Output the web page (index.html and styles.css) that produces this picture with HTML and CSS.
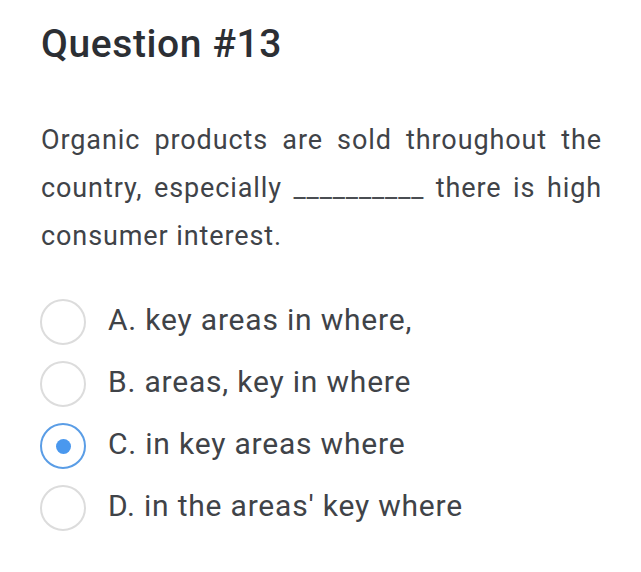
FILE: index.html
```html
<!DOCTYPE html>
<html lang="en">
<head>
    <meta charset="UTF-8">
    <meta name="viewport" content="width=device-width, initial-scale=1.0">
    <title>Question #13</title>
    <link rel="stylesheet" href="styles.css">
</head>
<body>
    <main class="question">
        <h1 class="question-title">Question #13</h1>
        <p class="question-text">Organic products are sold throughout the country, especially <span class="blank">__________</span> there is high consumer interest.</p>
        <ul class="options">
            <li class="option">
                <span class="radio"></span>
                <span class="option-label">A. key areas in where,</span>
            </li>
            <li class="option">
                <span class="radio"></span>
                <span class="option-label">B. areas, key in where</span>
            </li>
            <li class="option selected">
                <span class="radio"></span>
                <span class="option-label">C. in key areas where</span>
            </li>
            <li class="option">
                <span class="radio"></span>
                <span class="option-label">D. in the areas' key where</span>
            </li>
        </ul>
    </main>
</body>
</html>
```

FILE: styles.css
```css
body {
    font-family: Roboto, 'Noto Sans', sans-serif;
    background-color: #ffffff;
    color: #404348;
    margin: 0;
    padding: 0;
}
.question {
    padding: 20px 39px 0 41px;
}
.question-title {
    font-size: 39px;
    font-weight: 500;
    line-height: 48px;
    letter-spacing: 0.6px;
    color: #2c2f34;
    margin: 0;
}
.question-text {
    font-size: 27px;
    line-height: 48px;
    letter-spacing: 0.9px;
    text-align: justify;
    margin: 48px 0 0;
}
.blank {
    color: #4a4d52;
    letter-spacing: 0.9px;
}
.options {
    list-style: none;
    margin: 31px 0 0;
    padding: 0;
}
.option {
    display: flex;
    align-items: center;
    height: 62px;
}
.radio {
    width: 46px;
    height: 46px;
    margin-left: -1px;
    border: 2px solid #dcdcdc;
    border-radius: 50%;
    box-sizing: border-box;
    display: flex;
    justify-content: center;
    align-items: center;
    flex-shrink: 0;
}
.selected .radio {
    border-color: #5a9de6;
}
.selected .radio::after {
    content: '';
    width: 15px;
    height: 15px;
    border-radius: 50%;
    background-color: #4a98ee;
}
.option-label {
    font-size: 30px;
    letter-spacing: 0.8px;
    margin-left: 22px;
    padding-bottom: 5px;
}
```
